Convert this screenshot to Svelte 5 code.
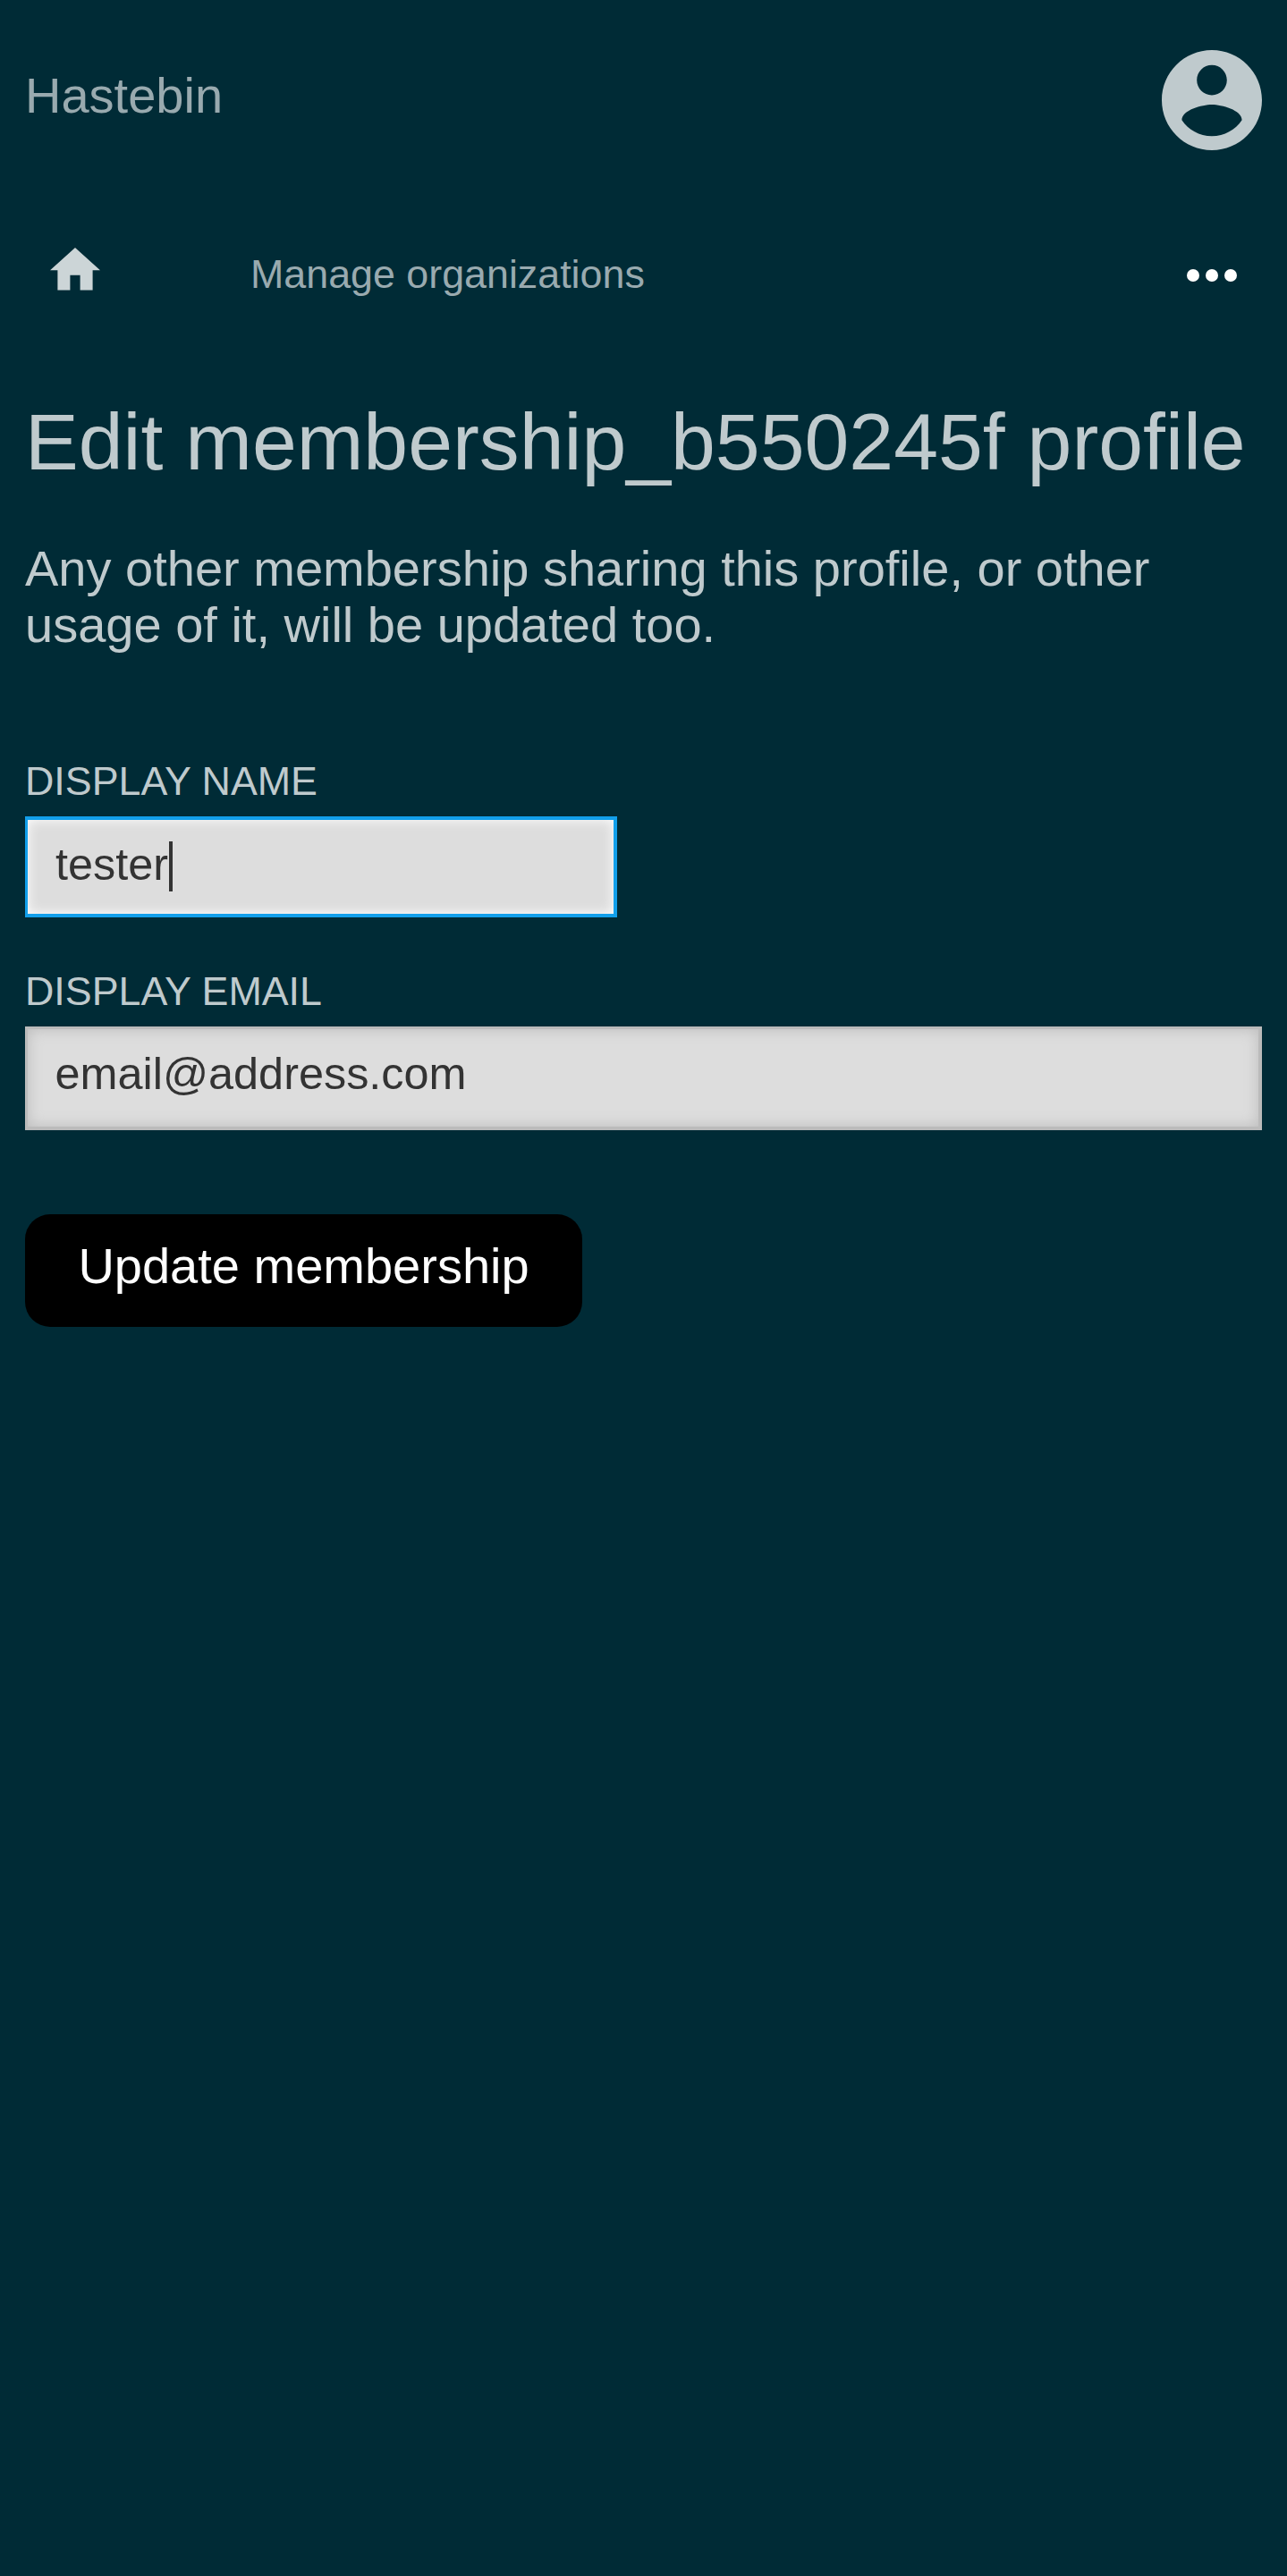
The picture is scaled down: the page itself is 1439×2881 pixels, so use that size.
<script>
  let name = $state('tester');
  let email = $state('email@address.com');
</script>

<div class="page">
  <header>
    <a class="brand" href="#home">Hastebin</a>
    <svg class="account" viewBox="2 2 20 20" aria-label="Account">
      <path d="M12 2C6.48 2 2 6.48 2 12s4.48 10 10 10 10-4.48 10-10S17.52 2 12 2zm0 3c1.66 0 3 1.34 3 3s-1.34 3-3 3-3-1.34-3-3 1.34-3 3-3zm0 14.2c-2.5 0-4.71-1.28-6-3.22.03-1.99 4-3.08 6-3.08 1.99 0 5.97 1.09 6 3.08-1.29 1.94-3.5 3.22-6 3.22z" />
    </svg>
  </header>

  <nav>
    <svg class="home" viewBox="2 3 20 17" aria-label="Home">
      <path d="M10 20v-6h4v6h5v-8h3L12 3 2 12h3v8z" />
    </svg>
    <a class="crumb" href="#organizations">Manage organizations</a>
    <svg class="more" viewBox="4 10 16 4" aria-label="More">
      <circle cx="6" cy="12" r="2" /><circle cx="12" cy="12" r="2" /><circle cx="18" cy="12" r="2" />
    </svg>
  </nav>

  <main>
    <h1>Edit membership_b550245f profile</h1>
    <p>Any other membership sharing this profile, or other usage of it, will be updated too.</p>
    <form>
      <div class="label">Display name</div>
      <div class="field focused"><span>{name}</span><i class="caret"></i></div>
      <div class="label second">Display email</div>
      <div class="field"><span>{email}</span></div>
      <button type="button">Update membership</button>
    </form>
  </main>
</div>

<style>
  :global(body) {
    background: #002b36;
  }
  .page {
    box-sizing: border-box;
    min-height: 2881px;
    padding: 56px 28px 0;
    font: 56px/63px "Liberation Sans", Arial, sans-serif;
    color: #bfcacd;
  }
  a {
    color: #99aaaf;
    text-decoration: none;
  }
  header {
    display: flex;
    justify-content: space-between;
    align-items: flex-start;
    height: 210px;
  }
  .brand {
    margin-top: 19px;
  }
  .account {
    width: 112px;
    height: 112px;
    fill: #bfcacd;
  }
  nav {
    display: flex;
    align-items: flex-start;
    height: 84px;
    padding: 0 28px;
  }
  .home {
    width: 56px;
    height: 47.6px;
    margin-top: 11.4px;
    fill: #ccd5d7;
  }
  .crumb {
    margin: 14px auto 0 168px;
    font-size: 44.8px;
    line-height: 52px;
  }
  .more {
    width: 56px;
    height: 14px;
    margin-top: 35px;
    fill: #fff;
  }
  h1 {
    margin: 93px 0 0;
    font-size: 89.6px;
    line-height: 102px;
    font-weight: 400;
    white-space: nowrap;
  }
  p {
    margin: 59px 0 0;
  }
  .label {
    margin-top: 117px;
    font-size: 44.8px;
    line-height: 52px;
    text-transform: uppercase;
  }
  .label.second {
    margin-top: 56px;
  }
  .field {
    box-sizing: border-box;
    display: flex;
    align-items: flex-start;
    height: 116px;
    margin-top: 14px;
    padding: 21px 30.5px 0;
    border: solid #bbb;
    border-width: 3px 4px 4px 3px;
    background: #ddd;
    box-shadow: inset 0 0 16px #bbb;
    color: #333;
    font-size: 50.4px;
    line-height: 58px;
  }
  .focused {
    width: 662px;
    height: 113px;
    border: solid #129fea;
    border-width: 4px 4px 4px 3px;
    padding: 21px 31px 0;
    box-shadow: inset 0 0 14px #fff;
  }
  .caret {
    width: 4px;
    height: 56px;
    margin: 3px 0 0 1px;
    background: #333;
  }
  button {
    display: block;
    width: 623px;
    height: 126px;
    margin-top: 94px;
    padding: 0 0 11px;
    border: 0;
    border-radius: 28px;
    background: #000;
    color: #fff;
    font: inherit;
  }
</style>
